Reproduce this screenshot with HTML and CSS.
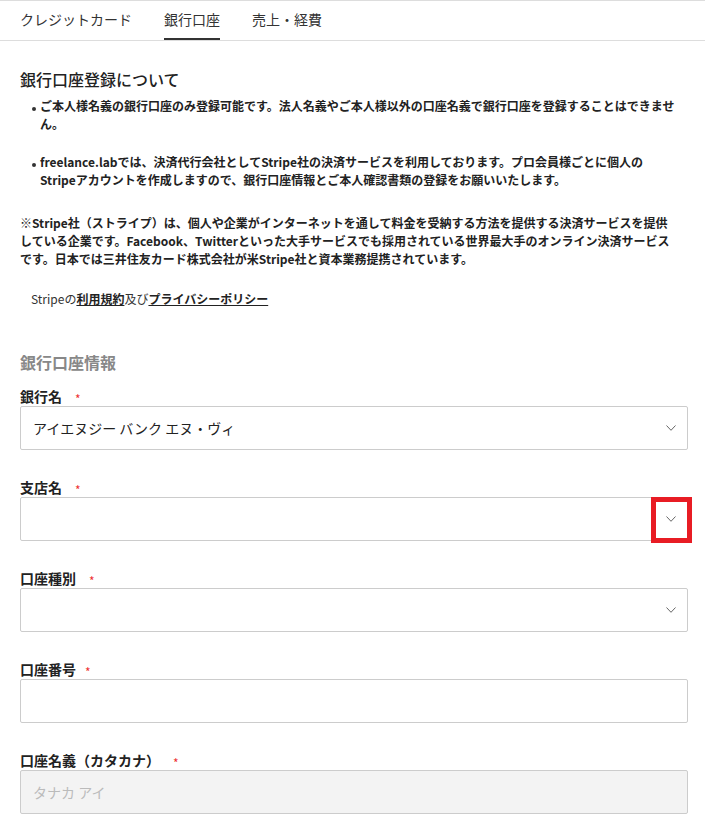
FILE: index.html
```html
<!DOCTYPE html>
<html lang="ja">
<head>
<meta charset="utf-8">
<link rel="stylesheet" href="styles.css">
</head>
<body>
<nav class="tabs">
  <span class="tab">クレジットカード</span>
  <span class="tab active">銀行口座</span>
  <span class="tab">売上・経費</span>
</nav>
<main class="content">
  <h2 class="title">銀行口座登録について</h2>
  <ul class="notes">
    <li>ご本人様名義の銀行口座のみ登録可能です。法人名義やご本人様以外の口座名義で銀行口座を登録することはできません。</li>
    <li>freelance.labでは、決済代行会社としてStripe社の決済サービスを利用しております。プロ会員様ごとに個人のStripeアカウントを作成しますので、銀行口座情報とご本人確認書類の登録をお願いいたします。</li>
  </ul>
  <p class="about">※Stripe社（ストライプ）は、個人や企業がインターネットを通して料金を受納する方法を提供する決済サービスを提供している企業です。Facebook、Twitterといった大手サービスでも採用されている世界最大手のオンライン決済サービスです。日本では三井住友カード株式会社が米Stripe社と資本業務提携されています。</p>
  <p class="terms">Stripeの<a class="link" href="#">利用規約</a>及び<a class="link" href="#">プライバシーポリシー</a></p>

  <h3 class="subtitle">銀行口座情報</h3>

  <div class="field">
    <label class="label">銀行名<span class="req">*</span></label>
    <div class="box select"><span class="value">アイエヌジー バンク エヌ・ヴィ</span><svg class="chev" width="10" height="6" viewBox="0 0 10 6"><polyline points="0.5,0.5 5,5.3 9.5,0.5" fill="none" stroke="#666" stroke-width="1"/></svg></div>
  </div>
  <div class="field">
    <label class="label">支店名<span class="req">*</span></label>
    <div class="box select"><span class="value"></span><svg class="chev" width="10" height="6" viewBox="0 0 10 6"><polyline points="0.5,0.5 5,5.3 9.5,0.5" fill="none" stroke="#666" stroke-width="1"/></svg><span class="highlight"></span></div>
  </div>
  <div class="field">
    <label class="label">口座種別<span class="req">*</span></label>
    <div class="box select"><span class="value"></span><svg class="chev" width="10" height="6" viewBox="0 0 10 6"><polyline points="0.5,0.5 5,5.3 9.5,0.5" fill="none" stroke="#666" stroke-width="1"/></svg></div>
  </div>
  <div class="field">
    <label class="label">口座番号<span class="req tight">*</span></label>
    <div class="box"></div>
  </div>
  <div class="field">
    <label class="label">口座名義（カタカナ）<span class="req">*</span></label>
    <div class="box disabled"><span class="placeholder">タナカ アイ</span></div>
  </div>
</main>
</body>
</html>
```

FILE: styles.css
```css
* { box-sizing: border-box; }
html, body { margin: 0; padding: 0; background: #fff; }
body {
  font-family: "Noto Sans CJK JP", "Noto Sans", sans-serif;
  color: #222;
  width: 705px;
  overflow: hidden;
}
.tabs {
  display: flex;
  gap: 32px;
  padding: 0 20px;
  height: 41px;
  border-top: 1px solid #ddd;
  border-bottom: 1px solid #ddd;
}
.tab {
  font-size: 14px;
  line-height: 37px;
  color: #333;
  border-bottom: 2px solid transparent;
  height: 39px;
}
.tab.active { border-bottom-color: #333; }
.content { padding: 0 17px 0 20px; }
.title {
  margin: 26px 0 6px;
  font-size: 16px;
  line-height: 24px;
  font-weight: 500;
  color: #222;
}
.notes {
  list-style: none;
  margin: 0;
  padding: 0 12px 0 20px;
}
.notes li {
  position: relative;
  font-size: 12px;
  line-height: 17.5px;
  font-weight: 700;
  margin-bottom: 21px;
}
.notes li::before {
  content: "";
  position: absolute;
  left: -8px;
  top: 10px;
  width: 4px;
  height: 4px;
  border-radius: 50%;
  background: #333;
}
.about {
  margin: 26px 0 0;
  padding-right: 12px;
  font-size: 12px;
  line-height: 18px;
  font-weight: 700;
}
.terms {
  margin: 22px 0 0;
  padding-left: 11px;
  font-size: 12px;
  line-height: 18px;
  color: #333;
}
.link {
  color: #222;
  font-weight: 700;
  text-decoration: underline;
}
.subtitle {
  margin: 42px 0 12px;
  font-size: 16px;
  line-height: 24px;
  font-weight: 700;
  color: #888;
}
.field { margin-bottom: 27px; }
.label {
  display: flex;
  align-items: center;
  height: 20px;
  font-size: 14px;
  line-height: 20px;
  font-weight: 700;
  color: #222;
}
.req {
  color: #e33;
  font-size: 12px;
  line-height: 12px;
  font-weight: 400;
  margin-left: 13px;
  margin-top: 6px;
}
.req.tight { margin-left: 9px; }
.box {
  position: relative;
  display: flex;
  align-items: center;
  width: 668px;
  height: 44px;
  border: 1px solid #ccc;
  border-radius: 2px;
  padding: 0 12px;
  font-size: 14px;
}
.select .value { flex: 1; color: #222; }
.chev { display: block; flex: none; margin-right: -1px; }
.disabled { background: #f3f3f3; }
.placeholder { color: #bbb; }
.highlight {
  position: absolute;
  right: -5px;
  top: -1px;
  width: 41px;
  height: 46px;
  border: 5px solid #e81c24;
}
```
